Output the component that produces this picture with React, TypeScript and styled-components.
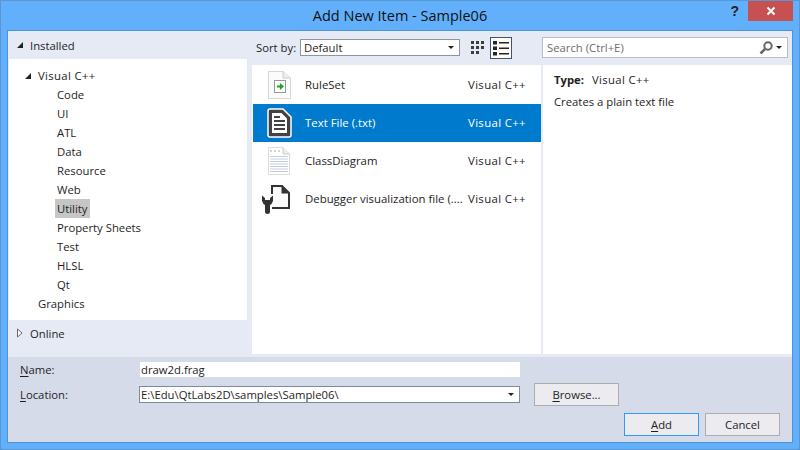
import React from "react";
import styled, { createGlobalStyle } from "styled-components";

const Global = createGlobalStyle`
  html, body { margin: 0; padding: 0; }
  body { width: 800px; height: 450px; overflow: hidden; font-family: "Open Sans", "Noto Sans", sans-serif; font-size: 11.3px; color: #1e1e1e; }
`;

const Frame = styled.div`
  width: 800px; height: 450px; box-sizing: border-box;
  background: #62b0fc; border: 1px solid #5a97d0;
  display: flex; flex-direction: column; padding: 0 6px 6px 6px;
`;
const TitleBar = styled.div`
  height: 29px; flex: none; display: flex; align-items: center; position: relative;
  justify-content: center;
`;
const Title = styled.div`font-size: 14.5px; color: #111; margin-top: -1px;`;
const Help = styled.div`
  position: absolute; right: 54px; top: 0px; font: bold 14px "Liberation Sans", sans-serif; line-height: 21px; color: #222;
`;
const Close = styled.div`
  position: absolute; right: 0; top: 0; width: 45px; height: 20px; background: #c75050;
  display: flex; align-items: center; justify-content: center;
`;
const Client = styled.div`
  flex: 1; display: flex; flex-direction: column; border: 1px solid #4d94d6; background: #e6eaf5; min-height: 0;
`;
const Upper = styled.div`flex: 1; display: flex; min-height: 0;`;
const LeftCol = styled.div`width: 244px; flex: none; display: flex; flex-direction: column;`;
const PaneHead = styled.div`
  height: 28px; flex: none; display: flex; align-items: center; gap: 6px; padding-left: 8px; box-sizing: border-box;
`;
const OnlineHead = styled(PaneHead)`margin-top: -1px;`;
const Tree = styled.div`
  width: 238px; height: 261px; flex: none; background: #fff; padding-top: 7px; box-sizing: border-box; margin-left: 1px;
`;
const TreeRow = styled.div<{ $level: number; $sel?: boolean }>`
  height: 19px; line-height: 19px; display: flex; align-items: center;
  padding-left: ${p => (p.$level === 2 ? 46 : 15)}px;
  > span { padding: 0 2px; ${p => (p.$sel ? "background: #c6c6c6;" : "")} }
`;
const TreeArrow = styled.div`width: 12px; display: flex; flex: none;`;
const MidCol = styled.div`width: 291px; flex: none; display: flex; flex-direction: column;`;
const Toolbar = styled.div`
  height: 34px; flex: none; display: flex; align-items: center; padding: 0 0 1px 4px; box-sizing: border-box;
`;
const SortLabel = styled.span`width: 44px; flex: none;`;
const Combo = styled.div`
  width: 160px; height: 17px; box-sizing: border-box; background: #fff; border: 1px solid #8b95a6;
  display: flex; align-items: center; justify-content: space-between; padding: 0 5px 0 3px;
`;
const Caret = styled.div`width: 0; height: 0; border: 3px solid transparent; border-top: 3px solid #222; border-bottom: 0;`;
const ViewBtn = styled.div<{ $on?: boolean }>`
  width: 22px; height: 22px; box-sizing: border-box; margin-left: ${p => (p.$on ? 1 : 7)}px; margin-top: 1px;
  display: flex; align-items: center; justify-content: center;
  ${p => (p.$on ? "border: 1px solid #3f5573; background: #fffdf2;" : "")}
`;
const List = styled.div`
  flex: 1; background: #fff; padding: 1px 0 0 1px; width: 289px; box-sizing: border-box;
`;
const Row = styled.div<{ $sel?: boolean }>`
  height: 38px; display: flex; align-items: center; width: 288px; font-size: 11.4px;
  background: ${p => (p.$sel ? "#007acc" : "transparent")}; color: ${p => (p.$sel ? "#fff" : "#1e1e1e")};
`;
const RowIcon = styled.div`width: 52px; flex: none; display: flex; justify-content: center;`;
const RowName = styled.div`width: 163px; flex: none; white-space: nowrap; margin-top: -2px;`;
const VisualCpp = styled.span`letter-spacing: 0.35px;`;
const RowType = styled(VisualCpp)`flex: 1; margin-top: -2px;`;
const RightCol = styled.div`flex: 1; display: flex; flex-direction: column; min-width: 0;`;
const SearchBar = styled.div`height: 34px; flex: none; display: flex; align-items: center; padding-bottom: 1px; box-sizing: border-box;`;
const Search = styled.div`
  width: 246px; height: 21px; box-sizing: border-box; background: #fff; border: 1px solid #b9bdc9; margin-left: -1px;
  display: flex; align-items: center; justify-content: space-between; padding: 0 5px 0 4px; color: #6d6d6d;
`;
const SearchIcons = styled.div`display: flex; align-items: center; gap: 3px;`;
const Details = styled.div`flex: 1; background: #fff; margin-left: -1px; border-left: 1px solid #e6eaf5; padding: 5px 11px;`;
const TypeLine = styled.div`height: 19px; line-height: 19px; b { font-weight: 700; margin-right: 8px; }`;
const Desc = styled.div`height: 19px; line-height: 19px; margin-top: 3px;`;
const Bottom = styled.div`
  height: 85px; flex: none; margin-top: 3px; background: #d6dbe9; display: flex; flex-direction: column; padding-left: 12px; box-sizing: border-box;
`;
const NameRow = styled.div`height: 24px; display: flex; align-items: center;`;
const LocationRow = styled.div`height: 26px; display: flex; align-items: center;`;
const FormLabel = styled.label`width: 120px; flex: none; u { text-underline-offset: 2px; }`;
const NameInput = styled.div`
  width: 380px; height: 15px; background: #fff; display: flex; align-items: center; padding-left: 1px; line-height: 15px; box-sizing: border-box;
`;
const LocInput = styled.div`
  width: 381px; height: 17px; box-sizing: border-box; background: #fff; border: 1px solid #7f8a9e; margin-left: -1px;
  display: flex; align-items: center; justify-content: space-between; padding: 0 5px 0 1px;
`;
const Btn = styled.div<{ $default?: boolean }>`
  width: 75px; height: 23px; box-sizing: border-box; background: #ecebf0; border: 1px solid ${p => (p.$default ? "#3399ff" : "#adadad")};
  display: flex; align-items: center; justify-content: center; u { text-underline-offset: 2px; }
`;
const BrowseBtn = styled(Btn)`margin-left: 14px; width: 85px;`;
const Actions = styled.div`display: flex; justify-content: flex-end; gap: 6px; padding-right: 12px; margin-top: 6px;`;

const Down = () => (
  <svg width="8" height="8" viewBox="0 0 8 8"><path d="M7 1V7H1Z" fill="#222" /></svg>
);
const Right = () => (
  <svg width="8" height="10" viewBox="0 0 8 10"><path d="M1.5 1L6 5L1.5 9Z" fill="#fff" stroke="#666" /></svg>
);
const GridIcon = () => (
  <svg width="14" height="14" viewBox="0 0 14 14" fill="#3c3c3c">
    {[0, 5, 10].map(y => [0, 5, 10].map(x => <rect key={`${x}-${y}`} x={x} y={y} width={x === 10 && y === 10 ? 0 : 3} height="3" />))}
  </svg>
);
const ListIcon = () => (
  <svg width="16" height="15" viewBox="0 0 16 15" fill="#223">
    {[0, 5.5, 11].map(y => <g key={y}><rect x="0" y={y} width="4" height="3.5" /><rect x="6" y={y + 1} width="10" height="1.5" /></g>)}
  </svg>
);
const RuleSetIcon = () => (
  <svg width="26" height="30" viewBox="0 0 26 30">
    <path d="M2.5 1.5H17L24.5 8V28.5H2.5Z" fill="#fbfbfb" stroke="#d6d6d6" />
    <path d="M17 1.5V8H24.5" fill="#eee" stroke="#ccc" />
    <rect x="8.5" y="10.5" width="11" height="12" fill="#fff" stroke="#999" />
    <path d="M11 15.5H14V13L18 16.5L14 20V17.5H11Z" fill="#1aa51a" />
  </svg>
);
const TextIcon = () => (
  <svg width="26" height="30" viewBox="0 0 26 30">
    <path d="M2 3Q2 1 4 1H17L25 9V27Q25 29 23 29H4Q2 29 2 27Z" fill="#424242" stroke="#fff" strokeWidth="1.5" />
    <path d="M6 5H15.5L21 10.5V25H6Z" fill="#fff" />
    <path d="M8 12H19V14H8ZM8 16H19V18H8ZM8 20H19V22H8ZM8 8H14V10H8Z" fill="#424242" />
  </svg>
);
const ClassIcon = () => (
  <svg width="24" height="30" viewBox="0 0 24 30">
    <path d="M1.5 1.5H16L22.5 8V28.5H1.5Z" fill="#fff" stroke="#dcdcdc" />
    <path d="M16 1.5V8H22.5" fill="#eee" stroke="#ccc" />
    {[10, 12.5, 15, 17.5, 20, 22.5, 25].map(y => <rect key={y} x="3" y={y} width="18" height="1" fill="#c3d0dc" />)}
    <path d="M3 5H13" stroke="#aaa" strokeDasharray="2 2" />
  </svg>
);
const DebugSvg = styled.svg`margin-right: 6px;`;
const DebugIcon = () => (
  <DebugSvg width="30" height="30" viewBox="0 0 30 30">
    <path d="M11 10V2H21L28 9V24H11" fill="#fafafa" stroke="#333" strokeWidth="2" />
    <path d="M20.5 2V9.5H28Z" fill="#333" />
    <path d="M1 11.5V17Q2 20 4 21V28Q4 30 6.5 30Q9 30 9 28V21Q11 20 12 17V11.5L9 14V16H4V14Z" fill="#333" />
  </DebugSvg>
);
const Lens = () => (
  <svg width="14" height="14" viewBox="0 0 14 14">
    <circle cx="9" cy="5" r="3.7" fill="none" stroke="#666" strokeWidth="2" />
    <path d="M6 8L1.5 12.5" stroke="#666" strokeWidth="2.6" />
  </svg>
);

const sub = ["Code", "UI", "ATL", "Data", "Resource", "Web", "Utility", "Property Sheets", "Test", "HLSL", "Qt"];
const items = [
  { name: "RuleSet", icon: <RuleSetIcon /> },
  { name: "Text File (.txt)", icon: <TextIcon />, sel: true },
  { name: "ClassDiagram", icon: <ClassIcon /> },
  { name: "Debugger visualization file (....", icon: <DebugIcon /> },
];

export default function App() {
  return (
    <Frame>
      <Global />
      <TitleBar>
        <Title>Add New Item - Sample06</Title>
        <Help>?</Help>
        <Close>
          <svg width="10" height="10" viewBox="0 0 10 10"><path d="M1.5 1.5L8.5 8.5M8.5 1.5L1.5 8.5" stroke="#fff" strokeWidth="2" /></svg>
        </Close>
      </TitleBar>
      <Client>
        <Upper>
          <LeftCol>
            <PaneHead><Down />Installed</PaneHead>
            <Tree>
              <TreeRow $level={1}><TreeArrow><Down /></TreeArrow><span><VisualCpp>Visual C++</VisualCpp></span></TreeRow>
              {sub.map(s => <TreeRow key={s} $level={2} $sel={s === "Utility"}><span>{s}</span></TreeRow>)}
              <TreeRow $level={1}><TreeArrow /><span>Graphics</span></TreeRow>
            </Tree>
            <OnlineHead><Right />Online</OnlineHead>
          </LeftCol>
          <MidCol>
            <Toolbar>
              <SortLabel>Sort by:</SortLabel>
              <Combo>Default<Caret /></Combo>
              <ViewBtn><GridIcon /></ViewBtn>
              <ViewBtn $on><ListIcon /></ViewBtn>
            </Toolbar>
            <List>
              {items.map(i => (
                <Row key={i.name} $sel={i.sel}>
                  <RowIcon>{i.icon}</RowIcon>
                  <RowName>{i.name}</RowName>
                  <RowType>Visual C++</RowType>
                </Row>
              ))}
            </List>
          </MidCol>
          <RightCol>
            <SearchBar>
              <Search>Search (Ctrl+E)<SearchIcons><Lens /><Caret /></SearchIcons></Search>
            </SearchBar>
            <Details>
              <TypeLine><b>Type:</b><VisualCpp>Visual C++</VisualCpp></TypeLine>
              <Desc>Creates a plain text file</Desc>
            </Details>
          </RightCol>
        </Upper>
        <Bottom>
          <NameRow><FormLabel><u>N</u>ame:</FormLabel><NameInput>draw2d.frag</NameInput></NameRow>
          <LocationRow>
            <FormLabel><u>L</u>ocation:</FormLabel>
            <LocInput>E:\Edu\QtLabs2D\samples\Sample06\<Caret /></LocInput>
            <BrowseBtn><span><u>B</u>rowse...</span></BrowseBtn>
          </LocationRow>
          <Actions>
            <Btn $default><span><u>A</u>dd</span></Btn>
            <Btn>Cancel</Btn>
          </Actions>
        </Bottom>
      </Client>
    </Frame>
  );
}
